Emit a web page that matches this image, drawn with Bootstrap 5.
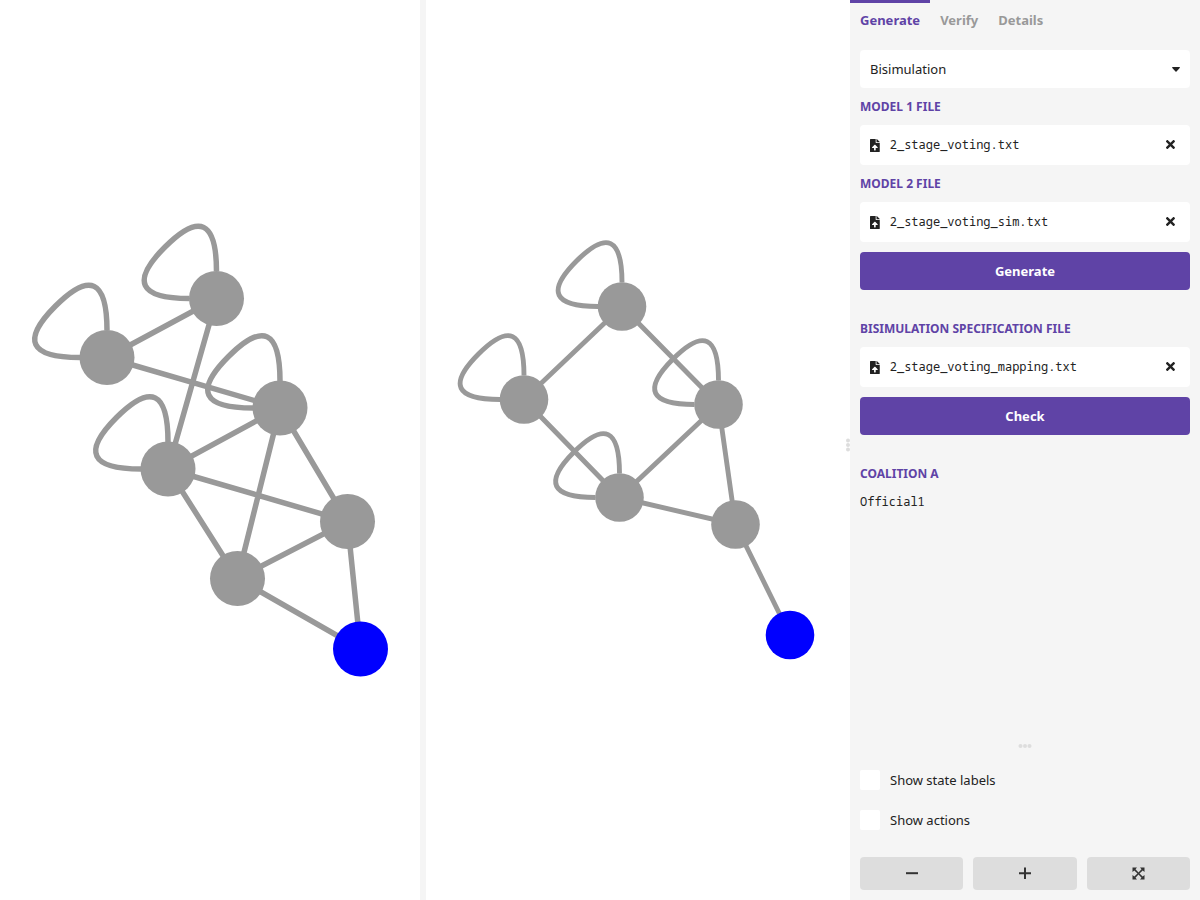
<!DOCTYPE html>
<html lang="en">
<head>
<meta charset="utf-8">
<meta name="viewport" content="width=device-width, initial-scale=1">
<title>Bisimulation</title>
<link rel="stylesheet" href="https://cdn.jsdelivr.net/npm/bootstrap@5.3.0/dist/css/bootstrap.min.css">
<style>
  :root { --accent: #5f43a6; --panel: #f5f5f5; --ink: #222; }
  body { font: 13px/18px "Noto Sans", sans-serif; color: var(--ink); background: #fff; }
  .graph-left { flex: 105 1 0; }
  .graph-right { flex: 106 1 0; }
  .graph-gap { width: 6px; background: var(--panel); }
  .graph { stroke: #999; fill: none; }
  .graph circle { fill: #999; stroke: none; }
  .graph .initial { fill: #00f; }
  .side-panel { width: 350px; background: var(--panel); }
  .grip { fill: #ddd; display: block; }
  .grip-side { left: -5px; top: 438px; }
  .tabs .nav-link { padding: 8px 10px 11px; border-top: 3px solid transparent; font-weight: 700; color: #999; line-height: 18px; }
  .tabs .nav-link.active { color: var(--accent); border-color: var(--accent); }
  .tab-body { padding: 10px; }
  .choice { height: 38px; padding: 2px 10px 0; font-size: 13px; color: var(--ink); background-color: #fff; border: 0; border-radius: 4px;
    background-image: url("data:image/svg+xml,%3Csvg xmlns='http://www.w3.org/2000/svg' viewBox='0 0 8 5'%3E%3Cpath fill='%23222' d='M.6 0h6.8q.9.2.3 1L4.5 4.6q-.5.5-1 0L.3 1Q-.2.2.6 0z'/%3E%3C/svg%3E"); background-size: 8px 5px; background-position: right 10px center; }
  .field-title { margin: 10px 0; font-size: 12px; line-height: 17px; font-weight: 700; text-transform: uppercase; color: var(--accent); }
  .file-row { height: 40px; padding: 0 10px; gap: 10px; background: #fff; border-radius: 4px; }
  .mono-text { font-family: "Noto Sans Mono", "Liberation Mono", monospace; font-size: 12px; line-height: 20px; }
  .icon { height: 13px; fill: currentColor; display: block; }
  .clear-btn { padding: 5px; margin-bottom: 2px; border: 0; color: var(--ink); }
  .action { height: 38px; padding: 2px 0 0; border: 0; border-radius: 4px; font-size: 13px; font-weight: 700; color: #fff; background: var(--accent); margin-top: 10px; }
  .action:hover { background: #50378f; color: #fff; }
  .section { margin-top: 30px; }
  .options { padding: 11px 10px 10px; }
  .option-row { height: 40px; gap: 10px; }
  .option-row .form-check-input { width: 20px; height: 20px; margin: 0; border: 0; border-radius: 2px; background-color: #fff; }
  .zoom-row { gap: 10px; margin-top: 17px; }
  .zoom-btn { height: 33px; padding: 0; border: 0; border-radius: 4px; background: #ddd; color: #333; }
</style>
</head>
<body>
<div class="d-flex vh-100 overflow-hidden">
  <main class="d-flex flex-fill">
    <svg class="graph graph-left h-100" viewBox="0 0 420 900" stroke-width="5.5" role="img" aria-label="Model 1">
      <defs><path id="loop1" d="M0-27Q0-103-51.500-51.500Q-103 0-27 0"/></defs>
      <path d="M107 357.500L216.500 298.500L168 469L280 408L107 357.500M168 469L347.500 521.500L280 408L237.500 578.500L168 469M237.500 578.500L347.500 521.500L360.500 649L237.500 578.500"/>
      <use href="#loop1" x="216.500" y="298.500"/><use href="#loop1" x="107" y="357.500"/><use href="#loop1" x="280" y="408"/><use href="#loop1" x="168" y="469"/>
      <circle cx="216.500" cy="298.500" r="27.500"/><circle cx="107" cy="357.500" r="27.500"/><circle cx="280" cy="408" r="27.500"/><circle cx="168" cy="469" r="27.500"/><circle cx="347.500" cy="521.500" r="27.500"/><circle cx="237.500" cy="578.500" r="27.500"/><circle class="initial" cx="360.500" cy="649" r="27.500"/>
    </svg>
    <div class="graph-gap"></div>
    <svg class="graph graph-right h-100" viewBox="426 0 424 900" stroke-width="4.9" role="img" aria-label="Model 2">
      <defs><path id="loop2" d="M0-24Q0-91-45.500-45.500Q-91 0-24 0"/></defs>
      <path d="M622 306.500L524 399.500L619.500 497.500L718.500 404.500L622 306.500M718.500 404.500L735.500 524.500L619.500 497.500M735.500 524.500L790 635"/>
      <use href="#loop2" x="622" y="306.500"/><use href="#loop2" x="524" y="399.500"/><use href="#loop2" x="718.500" y="404.500"/><use href="#loop2" x="619.500" y="497.500"/>
      <circle cx="622" cy="306.500" r="24.300"/><circle cx="524" cy="399.500" r="24.300"/><circle cx="718.500" cy="404.500" r="24.300"/><circle cx="619.500" cy="497.500" r="24.300"/><circle cx="735.500" cy="524.500" r="24.300"/><circle class="initial" cx="790" cy="635" r="24.300"/>
    </svg>
  </main>

  <aside class="side-panel position-relative d-flex flex-column flex-shrink-0">
    <svg class="grip grip-side position-absolute" width="6" height="14"><circle cx="3" cy="2.500" r="2"/><circle cx="3" cy="7" r="2"/><circle cx="3" cy="11.500" r="2"/></svg>
    <nav class="nav tabs">
      <a class="nav-link active" href="#generate">Generate</a>
      <a class="nav-link" href="#verify">Verify</a>
      <a class="nav-link" href="#details">Details</a>
    </nav>
    <div class="tab-body flex-fill overflow-auto" id="generate">
      <select class="form-select choice" aria-label="Mode"><option>Bisimulation</option></select>
      <h2 class="field-title">Model 1 file</h2>
      <div class="file-row d-flex align-items-center">
        <svg class="icon" viewBox="0 0 384 512"><path id="i-file" d="M224 136V0H24C10.700 0 0 10.700 0 24v464c0 13.300 10.700 24 24 24h336c13.300 0 24-10.700 24-24V160H248c-13.200 0-24-10.800-24-24zm65 216H224v80c0 8.800-7.200 16-16 16h-32c-8.800 0-16-7.200-16-16v-80H95c-14.300 0-21.400-17.300-11.300-27.400l96.400-95.700c6.600-6.600 17.400-6.600 24 0l96.400 95.700c10.100 10.100 3 27.400-11.500 27.400zM377 105L279 7c-4.500-4.500-10.600-7-17-7H256v128h128v-6c0-6.300-2.500-12.400-7-17z"/></svg>
        <span class="mono-text flex-fill">2_stage_voting.txt</span>
        <button class="btn clear-btn" type="button" aria-label="Clear model 1 file"><svg class="icon" viewBox="0 0 352 512"><path id="i-x" d="M242.700 256l100-100c12.300-12.300 12.300-32.200 0-44.500l-22.200-22.200c-12.300-12.300-32.200-12.300-44.500 0L176 189.300 75.900 89.200c-12.300-12.300-32.200-12.300-44.500 0L9.200 111.500c-12.300 12.300-12.300 32.200 0 44.500L109.300 256 9.200 356c-12.300 12.300-12.300 32.200 0 44.500l22.200 22.200c12.300 12.300 32.200 12.300 44.500 0L176 322.700l100 100c12.300 12.300 32.200 12.300 44.500 0l22.200-22.200c12.300-12.300 12.300-32.200 0-44.500z"/></svg></button>
      </div>
      <h2 class="field-title">Model 2 file</h2>
      <div class="file-row d-flex align-items-center">
        <svg class="icon" viewBox="0 0 384 512"><use href="#i-file"/></svg>
        <span class="mono-text flex-fill">2_stage_voting_sim.txt</span>
        <button class="btn clear-btn" type="button" aria-label="Clear model 2 file"><svg class="icon" viewBox="0 0 352 512"><use href="#i-x"/></svg></button>
      </div>
      <button class="btn action w-100" type="button">Generate</button>
      <section class="section">
        <h2 class="field-title">Bisimulation specification file</h2>
        <div class="file-row d-flex align-items-center">
          <svg class="icon" viewBox="0 0 384 512"><use href="#i-file"/></svg>
          <span class="mono-text flex-fill">2_stage_voting_mapping.txt</span>
          <button class="btn clear-btn" type="button" aria-label="Clear specification file"><svg class="icon" viewBox="0 0 352 512"><use href="#i-x"/></svg></button>
        </div>
        <button class="btn action w-100" type="button">Check</button>
      </section>
      <section class="section">
        <h2 class="field-title">Coalition A</h2>
        <div class="mono-text">Official1</div>
      </section>
    </div>
    <svg class="grip mx-auto" width="14" height="6"><circle cx="2.500" cy="3" r="2"/><circle cx="7" cy="3" r="2"/><circle cx="11.500" cy="3" r="2"/></svg>
    <div class="options">
      <div class="option-row d-flex align-items-center"><input class="form-check-input" type="checkbox" id="labels"><label for="labels">Show state labels</label></div>
      <div class="option-row d-flex align-items-center"><input class="form-check-input" type="checkbox" id="actions"><label for="actions">Show actions</label></div>
      <div class="zoom-row d-flex">
        <button class="btn zoom-btn flex-fill" type="button" aria-label="Zoom out"><svg class="icon mx-auto" viewBox="0 0 13 13"><path d="M1 5.200h12v2H1z"/></svg></button>
        <button class="btn zoom-btn flex-fill" type="button" aria-label="Zoom in"><svg class="icon mx-auto" viewBox="0 0 13 13"><path d="M1 5.300h5V.500h2v4.800h5v2H8V12H6V7.300H1z"/></svg></button>
        <button class="btn zoom-btn flex-fill" type="button" aria-label="Fit"><svg class="icon mx-auto" viewBox="0 0 13 13"><path d="M.5.500h4.500L3.500 2.300 6.500 5.500 9.500 2.300 8 .500h4.500V5L10.700 3.500 7.500 6.500l3.200 3L12.500 8v4.500H8l1.500-1.800L6.500 7.500 3.500 10.700l1.500 1.800H.5V8l1.800 1.500L5.500 6.500 2.300 3.500.5 5z"/></svg></button>
      </div>
    </div>
  </aside>
</div>
<script src="https://cdn.jsdelivr.net/npm/bootstrap@5.3.0/dist/js/bootstrap.bundle.min.js"></script>
</body>
</html>
